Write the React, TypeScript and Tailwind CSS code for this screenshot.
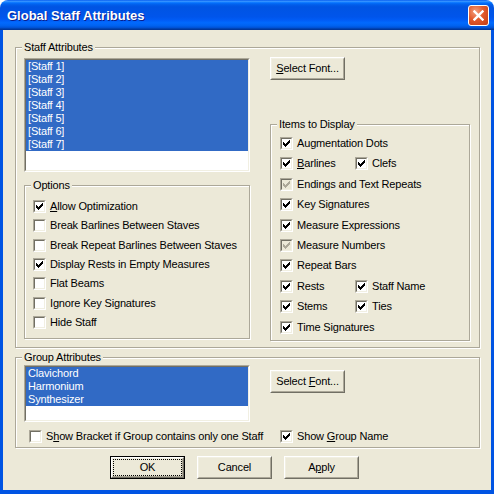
import React from "react";

const ui = "font-['Liberation_Sans',Arial,sans-serif] text-[11px] leading-[13px] tracking-[-0.16px] text-black";

function Sunken({
  className = "",
  innerClassName = "",
  children,
}: {
  className?: string;
  innerClassName?: string;
  children?: React.ReactNode;
}) {
  return (
    <div className={`border border-t-[#ACA899] border-l-[#ACA899] border-b-white border-r-white ${className}`}>
      <div
        className={`h-full border border-t-[#716F64] border-l-[#716F64] border-b-[#F1EFE2] border-r-[#F1EFE2] ${innerClassName}`}
      >
        {children}
      </div>
    </div>
  );
}

function CheckBox({ checked, disabled }: { checked?: boolean; disabled?: boolean }) {
  return (
    <Sunken
      className="w-[13px] h-[13px] shrink-0"
      innerClassName={`flex items-center justify-center ${disabled ? "bg-[#ECE9D8]" : "bg-white"}`}
    >
      {checked && (
        <svg width="7" height="7" viewBox="0 0 7 7" shapeRendering="crispEdges" fill={disabled ? "#ACA899" : "#000"}>
          <path d="M0 2h1v3h-1z M1 3h1v3h-1z M2 4h1v3h-1z M3 3h1v3h-1z M4 2h1v3h-1z M5 1h1v3h-1z M6 0h1v3h-1z" />
        </svg>
      )}
    </Sunken>
  );
}

function Option({
  checked,
  disabled,
  className = "",
  children,
}: {
  checked?: boolean;
  disabled?: boolean;
  className?: string;
  children: React.ReactNode;
}) {
  return (
    <label className={`flex items-center gap-[4px] h-[13px] whitespace-nowrap ${className}`}>
      <CheckBox checked={checked} disabled={disabled} />
      <span>{children}</span>
    </label>
  );
}

function Button({ children, isDefault }: { children: React.ReactNode; isDefault?: boolean }) {
  return (
    <button type="button" className={`w-[75px] h-[23px] shrink-0 ${isDefault ? "border border-black" : ""}`}>
      <div className="h-full border border-t-white border-l-white border-b-[#716F64] border-r-[#716F64]">
        <div className="h-full border border-t-[#F1EFE2] border-l-[#F1EFE2] border-b-[#ACA899] border-r-[#ACA899] bg-[#ECE9D8] flex items-center justify-center">
          {isDefault ? (
            <div className="w-full h-full border border-dotted border-black flex items-center justify-center">
              {children}
            </div>
          ) : (
            children
          )}
        </div>
      </div>
    </button>
  );
}

function GroupBox({
  label,
  className = "",
  children,
}: {
  label: string;
  className?: string;
  children?: React.ReactNode;
}) {
  return (
    <div className={`relative shrink-0 border border-[#ACA899] shadow-[inset_1px_1px_0_#fff,1px_1px_0_#fff] ${className}`}>
      <span className="absolute top-[-7px] left-[6px] px-[2px] bg-[#ECE9D8] leading-[13px] whitespace-nowrap">
        {label}
      </span>
      {children}
    </div>
  );
}

function ListBox({ items, className = "" }: { items: string[]; className?: string }) {
  return (
    <Sunken className={className} innerClassName="bg-white">
      {items.map((item) => (
        <div key={item} className="h-[13px] bg-[#316AC5] text-white pl-[2px] whitespace-nowrap">
          {item}
        </div>
      ))}
    </Sunken>
  );
}

export default function App() {
  const staves = ["[Staff 1]", "[Staff 2]", "[Staff 3]", "[Staff 4]", "[Staff 5]", "[Staff 6]", "[Staff 7]"];

  return (
    <div className={`w-[494px] h-[494px] bg-white ${ui}`}>
      {/* Title bar */}
      <div className="h-[30px] rounded-t-[8px] flex items-center pl-[7px] pr-[5px] pt-[1px] bg-[linear-gradient(to_bottom,#0058EE_0%,#3A93FF_4%,#288EFF_6%,#127DFF_8%,#036FFC_10%,#0262EE_14%,#0057E5_20%,#0054E3_24%,#0055EB_56%,#005BF5_66%,#026AFE_76%,#0062EF_86%,#0052D6_92%,#0040AB_96%,#003092_100%)]">
        <span className="font-['Liberation_Sans',Arial,sans-serif] font-bold text-[13px] tracking-normal text-white [text-shadow:1px_1px_0_#0A1E8C]">
          Global Staff Attributes
        </span>
        <div className="ml-auto w-[21px] h-[21px] rounded-[3px] border border-white bg-[radial-gradient(circle_at_35%_30%,#F4A080_0%,#E25A2C_45%,#C43C12_100%)] flex items-center justify-center">
          <svg width="11" height="11" viewBox="0 0 11 11">
            <path d="M1.5 1.5 L9.5 9.5 M9.5 1.5 L1.5 9.5" stroke="#fff" strokeWidth="2.4" strokeLinecap="square" />
          </svg>
        </div>
      </div>

      {/* Body */}
      <div className="h-[464px] bg-[#ECE9D8] border-x-[3px] border-b-[4px] border-[#0054E3] pl-[12px] pt-[17px]">
        <GroupBox label="Staff Attributes" className="w-[465px] h-[301px]">
          <div className="flex gap-[20px] pl-[8px] pt-[9px]">
            {/* Left column */}
            <div className="flex flex-col mt-[1px]">
              <ListBox items={staves} className="w-[226px] h-[114px]" />
              <GroupBox label="Options" className="mt-[13px] w-[226px] h-[154px]">
                <div className="flex flex-col gap-[6.33px] pl-[8px] pt-[14px]">
                  <Option checked>
                    <u>A</u>llow Optimization
                  </Option>
                  <Option>Break Barlines Between Staves</Option>
                  <Option>Break Repeat Barlines Between Staves</Option>
                  <Option checked>Display Rests in Empty Measures</Option>
                  <Option>Flat Beams</Option>
                  <Option>Ignore Key Signatures</Option>
                  <Option>Hide Staff</Option>
                </div>
              </GroupBox>
            </div>

            {/* Right column */}
            <div className="flex flex-col">
              <Button>
                <span>
                  <u>S</u>elect Font...
                </span>
              </Button>
              <GroupBox label="Items to Display" className="mt-[44px] w-[200px] h-[217px]">
                <div className="flex flex-col gap-[7.4px] pl-[9px] pt-[12px]">
                  <Option checked>Augmentation Dots</Option>
                  <div className="flex">
                    <Option checked className="w-[75px]">
                      <u>B</u>arlines
                    </Option>
                    <Option checked>Clefs</Option>
                  </div>
                  <Option checked disabled>
                    Endings and Text Repeats
                  </Option>
                  <Option checked>Key Signatures</Option>
                  <Option checked>Measure Expressions</Option>
                  <Option checked disabled>
                    Measure Numbers
                  </Option>
                  <Option checked>Repeat Bars</Option>
                  <div className="flex">
                    <Option checked className="w-[75px]">
                      Rests
                    </Option>
                    <Option checked>Staff Name</Option>
                  </div>
                  <div className="flex">
                    <Option checked className="w-[75px]">
                      Stems
                    </Option>
                    <Option checked>Ties</Option>
                  </div>
                  <Option checked>Time Signatures</Option>
                </div>
              </GroupBox>
            </div>
          </div>
        </GroupBox>

        <GroupBox label="Group Attributes" className="mt-[9px] w-[465px] h-[91px]">
          <div className="flex flex-col pl-[8px] pt-[7px]">
            <div className="flex gap-[20px]">
              <ListBox items={["Clavichord", "Harmonium", "Synthesizer"]} className="w-[226px] h-[57px]" />
              <div className="mt-[5px]">
                <Button>
                  <span>
                    Select <u>F</u>ont...
                  </span>
                </Button>
              </div>
            </div>
            <div className="flex mt-[8px] pl-[5px]">
              <Option className="w-[251px]">
                S<u>h</u>ow Bracket if Group contains only one Staff
              </Option>
              <Option checked>
                Show <u>G</u>roup Name
              </Option>
            </div>
          </div>
        </GroupBox>

        <div className="flex gap-[12px] mt-[8px] pl-[95px]">
          <Button isDefault>OK</Button>
          <Button>Cancel</Button>
          <Button>
            <span>
              A<u>p</u>ply
            </span>
          </Button>
        </div>
      </div>
    </div>
  );
}
